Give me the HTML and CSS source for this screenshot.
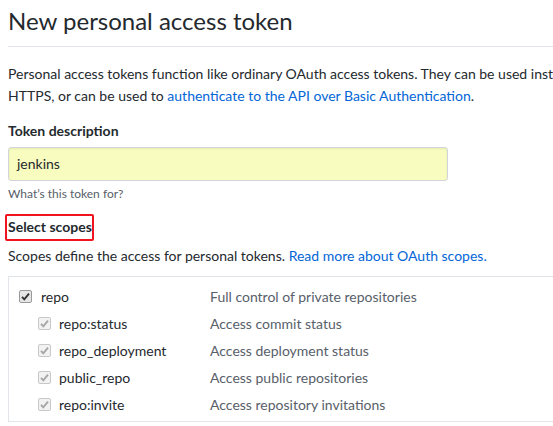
FILE: index.html
```html
<!DOCTYPE html>
<html>
<head>
<meta charset="utf-8">
<link rel="stylesheet" href="styles.css">
</head>
<body>
<div class="page">
  <h2 class="title">New personal access token</h2>
  <p class="intro"><span class="line">Personal access tokens function like ordinary OAuth access tokens. They can be used instead of a password for Git over</span><span class="line">HTTPS, or can be used to <a href="#">authenticate to the API over Basic Authentication</a>.</span></p>
  <div class="field">
    <label class="label">Token description</label>
    <div class="input">jenkins</div>
    <div class="note">What’s this token for?</div>
  </div>
  <div class="scopes-head"><span class="highlight">Select scopes</span></div>
  <p class="scopes-text">Scopes define the access for personal tokens. <a href="#">Read more about OAuth scopes.</a></p>
  <div class="scope-box">
    <div class="row">
      <div class="name main"><span class="cb"><svg viewBox="0 0 13 13" width="13" height="13"><path d="M3 6.8 L5.3 9.3 L10 3.6" fill="none" stroke="#333" stroke-width="1.9"/></svg></span>repo</div>
      <div class="desc">Full control of private repositories</div>
    </div>
    <div class="row">
      <div class="name sub"><span class="cb dis"><svg viewBox="0 0 13 13" width="13" height="13"><path d="M3 6.8 L5.3 9.3 L10 3.6" fill="none" stroke="#a6a6a6" stroke-width="1.9"/></svg></span>repo:status</div>
      <div class="desc">Access commit status</div>
    </div>
    <div class="row">
      <div class="name sub"><span class="cb dis"><svg viewBox="0 0 13 13" width="13" height="13"><path d="M3 6.8 L5.3 9.3 L10 3.6" fill="none" stroke="#a6a6a6" stroke-width="1.9"/></svg></span>repo_deployment</div>
      <div class="desc">Access deployment status</div>
    </div>
    <div class="row">
      <div class="name sub"><span class="cb dis"><svg viewBox="0 0 13 13" width="13" height="13"><path d="M3 6.8 L5.3 9.3 L10 3.6" fill="none" stroke="#a6a6a6" stroke-width="1.9"/></svg></span>public_repo</div>
      <div class="desc">Access public repositories</div>
    </div>
    <div class="row">
      <div class="name sub"><span class="cb dis"><svg viewBox="0 0 13 13" width="13" height="13"><path d="M3 6.8 L5.3 9.3 L10 3.6" fill="none" stroke="#a6a6a6" stroke-width="1.9"/></svg></span>repo:invite</div>
      <div class="desc">Access repository invitations</div>
    </div>
  </div>
</div>
</body>
</html>
```
FILE: styles.css
```css
html, body {
  margin: 0;
  padding: 0;
  background: #fff;
  overflow: hidden;
}
body {
  font-family: "Segoe UI", Lato, "Noto Sans", sans-serif;
  font-size: 14px;
  color: #24292e;
  width: 553px;
  height: 426px;
}
.page {
  padding: 0 0 0 8px;
  width: 545px;
  overflow: hidden;
}
a {
  color: #0366d6;
  text-decoration: none;
}
.title {
  margin: 0;
  padding: 4px 0 8px;
  font-size: 24px;
  font-weight: 400;
  line-height: 34px;
  border-bottom: 1px solid #e1e4e8;
}
.intro {
  margin: 16px 0 0;
  line-height: 22px;
}
.line {
  display: block;
  white-space: nowrap;
}
.field {
  margin-top: 12px;
}
.label {
  display: block;
  font-weight: 700;
  line-height: 20px;
  padding-top: 2px;
}
.input {
  margin-top: 6px;
  width: 422px;
  height: 32px;
  padding: 0 8px;
  line-height: 32px;
  background: #f9fcbf;
  border: 1px solid #d1d5da;
  border-radius: 3px;
  box-shadow: inset 0 1px 2px rgba(27,31,35,0.075);
}
.note {
  margin-top: 4px;
  font-size: 12px;
  line-height: 18px;
  color: #586069;
}
.scopes-head {
  margin-top: 11px;
  line-height: 20px;
  font-weight: 700;
}
.highlight {
  display: inline-block;
  margin-left: -3px;
  padding: 1px 0 2px 1px;
  border: 2px solid #f0141e;
  border-radius: 2px;
}
.scopes-text {
  margin: 4px 0 0;
  line-height: 22px;
}
.scope-box {
  margin-top: 9px;
  border: 1px solid #e1e4e8;
  border-right: none;
  padding: 6px 0 3px;
}
.row {
  display: flex;
  height: 27px;
  align-items: center;
}
.name {
  display: flex;
  align-items: center;
  width: 201px;
}
.name.main {
  padding-left: 10px;
  width: 191px;
}
.name.sub {
  padding-left: 29px;
  width: 172px;
}
.cb {
  width: 11px;
  height: 11px;
  border: 1px solid #9a9a9a;
  border-radius: 2px;
  background: #e6e6e6;
  margin-right: 9px;
  position: relative;
  flex: none;
}
.cb svg {
  position: absolute;
  left: -1px;
  top: -1px;
}
.cb.dis {
  border-color: #c8c8c8;
  background: #f2f2f2;
  margin-right: 8px;
}
.desc {
  color: #586069;
}
```
